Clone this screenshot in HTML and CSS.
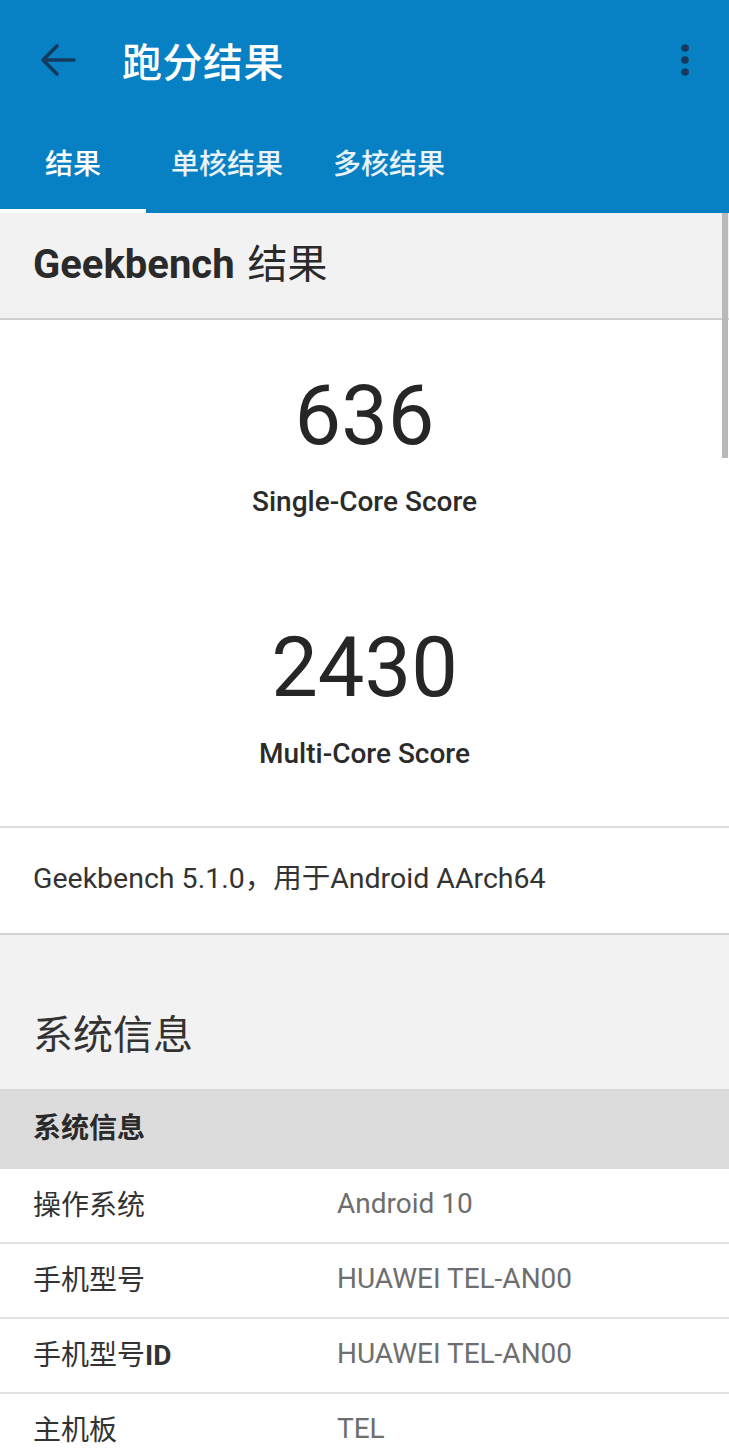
FILE: index.html
```html
<!DOCTYPE html>
<html lang="zh-CN">
<head>
<meta charset="utf-8">
<title>跑分结果</title>
<link rel="stylesheet" href="styles.css">
</head>
<body>
<div class="app">
  <header class="appbar">
    <div class="toolbar">
      <svg class="back" width="40" height="40" viewBox="0 0 40 40">
        <path d="M6 20 H37 M20 6 L6 20 L20 34" fill="none" stroke="#143a5e" stroke-width="3.6" stroke-linecap="round" stroke-linejoin="round"/>
      </svg>
      <div class="title">跑分结果</div>
      <svg class="more" width="12" height="36" viewBox="0 0 12 36">
        <circle cx="6" cy="6" r="3.8" fill="#143a5e"/>
        <circle cx="6" cy="18" r="3.8" fill="#143a5e"/>
        <circle cx="6" cy="30" r="3.8" fill="#143a5e"/>
      </svg>
    </div>
    <nav class="tabs">
      <div class="tab tab-active">结果</div>
      <div class="tab">单核结果</div>
      <div class="tab">多核结果</div>
    </nav>
  </header>

  <main class="content">
    <div class="scrollbar"></div>
    <section class="gb-head"><b>Geekbench</b> 结果</section>
    <section class="scores">
      <div class="score">636</div>
      <div class="score-label">Single-Core Score</div>
      <div class="score score-2">2430</div>
      <div class="score-label">Multi-Core Score</div>
    </section>
    <section class="version">Geekbench 5.1.0，用于Android AArch64</section>
    <section class="sys-title">系统信息</section>
    <section class="table">
      <div class="table-head">系统信息</div>
      <div class="row"><div class="key">操作系统</div><div class="val">Android 10</div></div>
      <div class="row"><div class="key">手机型号</div><div class="val">HUAWEI TEL-AN00</div></div>
      <div class="row"><div class="key">手机型号<b>ID</b></div><div class="val">HUAWEI TEL-AN00</div></div>
      <div class="row"><div class="key">主机板</div><div class="val">TEL</div></div>
    </section>
  </main>
</div>
</body>
</html>
```

FILE: styles.css
```css
* { box-sizing: border-box; }
html, body {
  margin: 0;
  padding: 0;
  background: #ffffff;
}
body {
  font-family: Roboto, "Noto Sans CJK SC", sans-serif;
  color: #2e2e2e;
  width: 729px;
  height: 1455px;
  overflow: hidden;
}
.app { width: 729px; }

.appbar {
  background: #0880c4;
  color: #ffffff;
}
.toolbar {
  height: 120px;
  display: flex;
  align-items: center;
  padding: 0 0 0 37px;
}
.back { flex: none; }
.title {
  margin-left: 45px;
  font-size: 40px;
  font-weight: 500;
  letter-spacing: 0.5px;
  flex: 1;
}
.more { margin-right: 38px; }

.tabs {
  display: flex;
  height: 93px;
}
.tab {
  padding: 0 25px;
  font-size: 28px;
  font-weight: 500;
  line-height: 89px;
  color: #e8f3fa;
}
.tab-active {
  width: 146px;
  padding: 0;
  text-align: center;
  color: #ffffff;
  border-bottom: 4px solid #ffffff;
  line-height: 90px;
}

.content { position: relative; }
.scrollbar {
  position: absolute;
  right: 1px;
  top: 0;
  width: 6px;
  height: 245px;
  background: #b9b9b9;
}

.gb-head {
  background: #f2f2f2;
  height: 107px;
  border-bottom: 2px solid #cfcfcf;
  padding-left: 33px;
  font-size: 40px;
  font-weight: 400;
  line-height: 104px;
  color: #2a2a2a;
  word-spacing: 3px;
}
.gb-head b { font-weight: 700; }

.scores {
  padding: 46px 0 52px;
  text-align: center;
  border-bottom: 2px solid #dedede;
}
.score {
  font-size: 83px;
  line-height: 100px;
  color: #262626;
}
.score-2 { margin-top: 96px; }
.score-label {
  margin-top: 16px;
  font-size: 28px;
  font-weight: 500;
  line-height: 40px;
  color: #2b2b2b;
}

.version {
  height: 107px;
  padding-left: 33px;
  font-size: 28.5px;
  line-height: 102px;
  color: #333333;
  border-bottom: 2px solid #d4d4d4;
  box-shadow: 0 1px 2px rgba(0,0,0,0.12);
}

.sys-title {
  background: #f2f2f2;
  height: 156px;
  padding-left: 33px;
  padding-top: 76px;
  font-size: 40px;
  line-height: 50px;
  color: #333333;
  border-bottom: 2px solid #d8d8d8;
}

.table-head {
  background: #dcdcdc;
  height: 78px;
  padding-left: 33px;
  font-size: 28px;
  font-weight: 700;
  line-height: 76px;
  color: #2a2a2a;
}
.row {
  display: flex;
  height: 75px;
  align-items: center;
  padding-bottom: 5px;
  border-bottom: 2px solid #e4e4e4;
  font-size: 28px;
}
.key {
  width: 337px;
  padding-left: 33px;
  color: #333333;
}
.key b { font-weight: 700; }
.val {
  color: #6e6e6e;
}
```
